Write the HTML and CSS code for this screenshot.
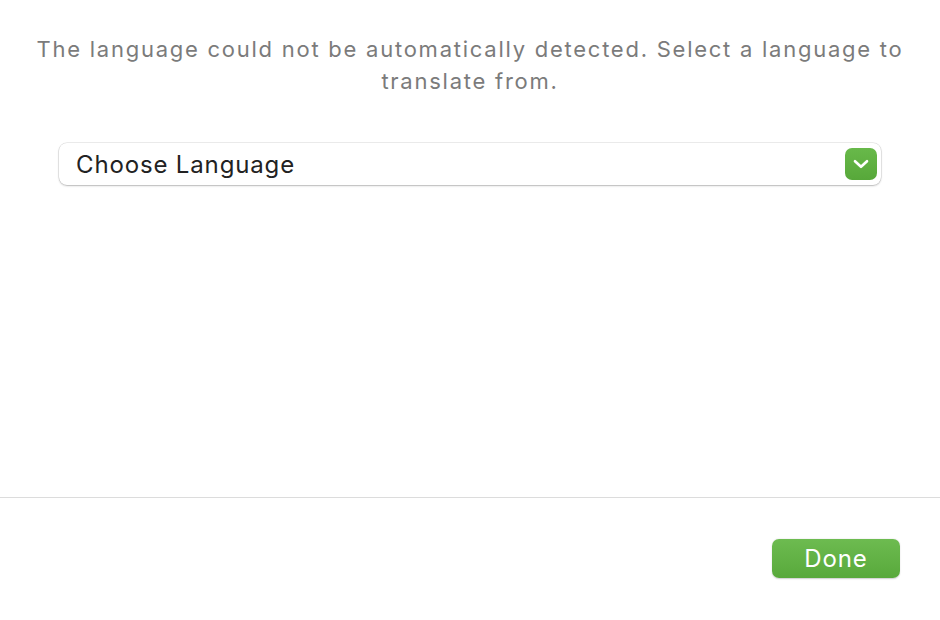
FILE: index.html
```html
<!DOCTYPE html>
<html>
<head>
<meta charset="utf-8">
<link rel="stylesheet" href="styles.css">
</head>
<body>
<div class="dialog">
  <div class="content">
    <p class="message">The language could not be automatically detected. Select a language to translate from.</p>
    <div class="select">
      <span class="select-label">Choose Language</span>
      <span class="select-btn">
        <svg width="16" height="10" viewBox="0 0 16 10"><path d="M2 2.2 L8 7.8 L14 2.2" fill="none" stroke="#fff" stroke-width="2.6" stroke-linecap="round" stroke-linejoin="round"/></svg>
      </span>
    </div>
  </div>
  <div class="footer">
    <button class="done">Done</button>
  </div>
</div>
</body>
</html>
```
FILE: styles.css
```css
html, body {
  margin: 0;
  padding: 0;
  background: #fff;
}
body {
  font-family: Inter, "Noto Sans", sans-serif;
}
.dialog {
  width: 940px;
  height: 620px;
  display: flex;
  flex-direction: column;
}
.content {
  height: 498px;
  padding: 33px 59px 0 59px;
  box-sizing: border-box;
  border-bottom: 1px solid #dcdcdc;
}
.message {
  margin: 0 -40px;
  text-align: center;
  color: #7b7b7b;
  font-size: 22px;
  line-height: 32px;
  letter-spacing: 1.75px;
}
.select {
  margin-top: 46px;
  height: 42px;
  box-sizing: border-box;
  border-radius: 8px;
  background: #fff;
  box-shadow: 0 0 0 0.5px rgba(0,0,0,0.14), 0 1px 2px rgba(0,0,0,0.22);
  display: flex;
  align-items: center;
  justify-content: space-between;
  padding: 0 4px 0 17px;
}
.select-label {
  font-size: 24px;
  color: #222;
  letter-spacing: 0.85px;
}
.select-btn {
  width: 32px;
  height: 32px;
  border-radius: 7px;
  background: linear-gradient(#68b94a, #57a83a);
  display: flex;
  align-items: center;
  justify-content: center;
}
.footer {
  flex: 1;
  display: flex;
  justify-content: flex-end;
  padding: 41px 40px 0 0;
  align-items: flex-start;
}
.done {
  width: 128px;
  height: 39px;
  border: none;
  border-radius: 7px;
  background: linear-gradient(#6dbb50, #58a93b);
  box-shadow: 0 0.5px 1.5px rgba(0,0,0,0.2);
  color: #fff;
  font-family: Inter, "Noto Sans", sans-serif;
  font-size: 24px;
  letter-spacing: 0.9px;
  padding: 0;
}
```
